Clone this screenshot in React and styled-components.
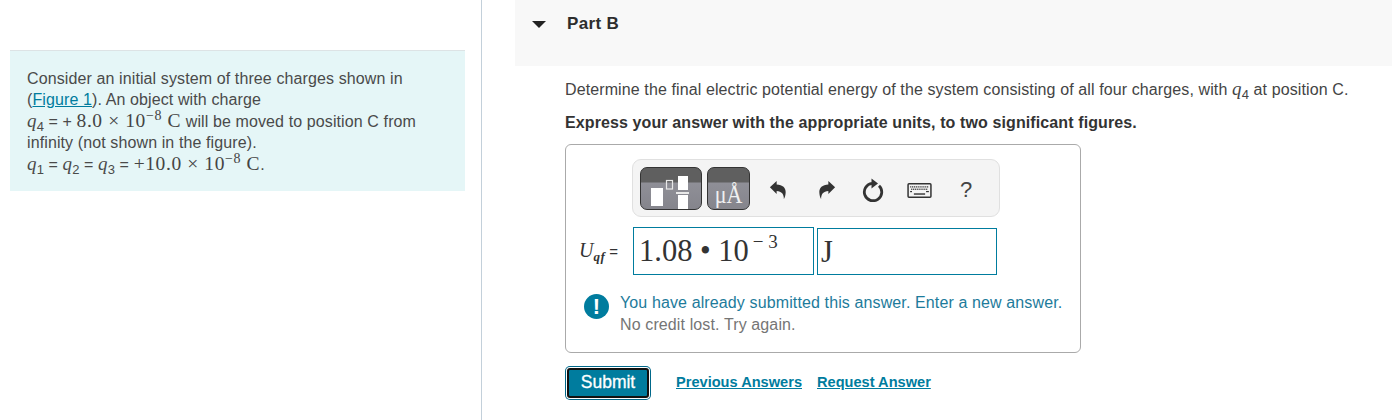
import React from 'react';
import styled, { createGlobalStyle } from 'styled-components';

const GlobalStyle = createGlobalStyle`
  html, body { margin: 0; padding: 0; background: #fff; }
  body { font-family: "Liberation Sans", Arial, sans-serif; }
`;

const Page = styled.div`
  display: flex;
  width: 1392px;
  height: 420px;
  overflow: hidden;
`;

const LeftColumn = styled.aside`
  box-sizing: border-box;
  width: 482px;
  height: 420px;
  padding: 50px 16px 0 10px;
  border-right: 1px solid #c3d0da;
`;

const Intro = styled.div`
  box-sizing: border-box;
  height: 141px;
  padding: 17px 0 0 17px;
  background: #e5f6f7;
  border-top: 1px solid #dde3e5;
  color: #4a4a4a;
  font-size: 16px;
  letter-spacing: 0.11px;
  line-height: 21px;
`;

const IntroLine = styled.div`
  white-space: nowrap;
  height: ${p => p.$h || 21}px;
  line-height: ${p => p.$h || 21}px;
`;

const FigureLink = styled.a`
  color: #007c9e;
  text-decoration: underline;
`;

const Math = styled.span`
  font-family: "Liberation Serif", "Times New Roman", serif;
  font-size: 19.5px;
  letter-spacing: 0.6px;
  color: #444;
`;

const Var = styled.i`
  font-family: "Liberation Serif", "Times New Roman", serif;
  font-size: 19px;
`;

const Sub = styled.sub`
  font-size: 13px;
  line-height: 0;
`;

const Sup = styled.sup`
  font-size: 14px;
  line-height: 0;
  vertical-align: 7px;
`;

const RightColumn = styled.main`
  flex: 1;
  padding-left: 33px;
`;

const PartHeader = styled.header`
  display: flex;
  align-items: flex-start;
  height: 66px;
  padding: 15px 0 0 17px;
  box-sizing: border-box;
  background: #f8f8f8;
`;

const Caret = styled.span`
  width: 0;
  height: 0;
  margin: 6px 21px 0 0;
  border-left: 7px solid transparent;
  border-right: 7px solid transparent;
  border-top: 7px solid #222;
`;

const PartTitle = styled.h2`
  margin: 0;
  font-size: 17px;
  letter-spacing: 0.35px;
  line-height: 18px;
  font-weight: 700;
  color: #2d2d2d;
`;

const Body = styled.section`
  padding: 12px 0 0 50px;
`;

const Question = styled.p`
  margin: 0;
  font-size: 16px;
  letter-spacing: 0.11px;
  line-height: 21px;
  color: #444;
  white-space: nowrap;
`;

const Instruction = styled.p`
  margin: 12px 0 0;
  font-size: 16px;
  letter-spacing: 0.11px;
  line-height: 21px;
  font-weight: 700;
  color: #333;
`;

const AnswerBox = styled.div`
  box-sizing: border-box;
  width: 516px;
  height: 209px;
  margin-top: 11px;
  padding: 14px 0 0 13px;
  border: 1px solid #aaa;
  border-radius: 6px;
`;

const Toolbar = styled.div`
  box-sizing: border-box;
  display: flex;
  align-items: center;
  width: 368px;
  height: 58px;
  margin-left: 53px;
  padding-left: 7px;
  background: #f4f4f4;
  border: 1px solid #e0e0e0;
  border-radius: 9px;
`;

const TemplateButton = styled.div`
  box-sizing: border-box;
  display: flex;
  align-items: flex-end;
  justify-content: center;
  width: ${p => p.$w}px;
  height: 43px;
  margin-right: ${p => p.$mr}px;
  border: 1px solid #333;
  border-radius: 7px;
  background: linear-gradient(#5f5f5f 0, #5f5f5f 14px, #8f8f97 15px, #85858c 100%);
  overflow: hidden;
`;

const UnitGlyph = styled.span`
  display: inline-block;
  font-family: "Liberation Serif", "Times New Roman", serif;
  font-size: 22px;
  line-height: 25px;
  color: #f0f0f0;
  white-space: nowrap;
  transform: translateY(-1px) scaleY(1.12);
  transform-origin: 50% 80%;
`;

const ToolIcon = styled.span`
  display: flex;
  align-items: center;
  justify-content: center;
  width: ${p => p.$w}px;
  margin-left: ${p => p.$ml || 0}px;
  padding-top: 4px;
  color: #333;
`;

const HelpMark = styled.span`
  font-size: 22px;
  color: #444;
  line-height: 24px;
`;

const InputRow = styled.div`
  display: flex;
  align-items: flex-end;
  margin-top: 10px;
`;

const InputLabel = styled.div`
  width: 54px;
  height: 46px;
  line-height: 43px;
  box-sizing: border-box;
  font-family: "Liberation Serif", "Times New Roman", serif;
  color: #333;
  white-space: nowrap;
`;

const LabelVar = styled.i`
  font-size: 20px;
`;

const LabelSub = styled.sub`
  font-size: 13px;
  font-style: italic;
  font-weight: 700;
  letter-spacing: 0.5px;
  line-height: 0;
  vertical-align: -4px;
`;

const LabelEq = styled.span`
  font-family: "Liberation Sans", Arial, sans-serif;
  font-size: 15px;
  margin-left: 4px;
`;

const AnswerField = styled.div`
  box-sizing: border-box;
  width: ${p => p.$w}px;
  height: ${p => p.$h}px;
  margin-right: 3px;
  padding-left: ${p => p.$pl}px;
  border: 1px solid #007c9e;
  font-family: "Liberation Serif", "Times New Roman", serif;
  font-size: 30.5px;
  line-height: 47px;
  color: #333;
  white-space: nowrap;
`;

const Exponent = styled.sup`
  font-size: 19px;
  line-height: 0;
  vertical-align: 13px;
  margin-left: 4px;
`;

const Feedback = styled.div`
  display: flex;
  align-items: flex-start;
  margin-top: 17px;
  margin-left: 5px;
`;

const FeedbackIcon = styled.span`
  flex: none;
  display: flex;
  align-items: center;
  justify-content: center;
  width: 25px;
  height: 25px;
  margin: 2px 11px 0 0;
  border-radius: 50%;
  background: #007c9e;
  color: #fff;
  font-size: 22px;
  font-weight: 700;
`;

const FeedbackText = styled.div`
  font-size: 16px;
  letter-spacing: 0.12px;
  line-height: 21.5px;
  white-space: nowrap;
  color: #757575;
`;

const FeedbackLead = styled.div`
  color: #1d7b9b;
`;

const Actions = styled.div`
  display: flex;
  align-items: center;
  margin-top: 15px;
  padding-left: 2px;
`;

const SubmitButton = styled.button`
  box-sizing: border-box;
  width: 82px;
  height: 30px;
  padding: 0 0 2px;
  background: #007c9e;
  border: 2px solid #111;
  border-radius: 3px;
  box-shadow: 0 0 0 1px #fff, 0 0 0 2px #00688a;
  color: #fff;
  font-family: "Liberation Sans", Arial, sans-serif;
  font-size: 17.5px;
  font-weight: 400;
  -webkit-text-stroke: 0.3px #fff;
`;

const ActionLink = styled.a`
  margin: 0 0 2px ${p => p.$ml}px;
  color: #007c9e;
  font-size: 14.6px;
  font-weight: 700;
  text-decoration: underline;
`;

const FractionIcon = () => (
  <svg width="60" height="41" viewBox="0 0 60 41" style={{ display: 'block' }}>
    <rect x="10" y="20" width="12" height="18" fill="#fff" />
    <rect x="25.500" y="12.500" width="6" height="8.500" fill="none" stroke="#e8e8e8" strokeWidth="1.200" />
    <rect x="37" y="8" width="10" height="14" fill="#fff" />
    <rect x="35" y="24" width="13" height="2" fill="#e8e8e8" />
    <rect x="37" y="27" width="10" height="14" fill="#fff" />
  </svg>
);

const UndoIcon = ({ flip }) => (
  <svg width="18" height="20" viewBox="0 0 20 22" style={flip ? { transform: 'scaleX(-1)' } : undefined}>
    <path d="M1 8 L8.500 1 V5 C15 5 19 9 18.500 14 C18.300 17 17.500 19.500 16.500 21 C16.800 16 14 12 8.500 12 V15.500 Z" fill="#333" />
  </svg>
);

const ResetIcon = () => (
  <svg width="22" height="24" viewBox="0 0 22 24">
    <path d="M10 5.400 A8.700 8.700 0 1 0 17 7.700" fill="none" stroke="#333" strokeWidth="2.800" />
    <path d="M9.500 0.500 L16 5.400 L9.500 10.500 Z" fill="#333" />
  </svg>
);

const KeyboardIcon = () => {
  const dots = [];
  for (let i = 0; i < 10; i++) dots.push(<rect key={`a${i}`} x={3 + i * 2} y="3.500" width="1.300" height="1.300" />);
  for (let i = 0; i < 9; i++) dots.push(<rect key={`b${i}`} x={4 + i * 2} y="6" width="1.300" height="1.300" />);
  return (
    <svg width="25" height="15" viewBox="0 0 26 16">
      <rect x="0.800" y="0.800" width="24.400" height="14.400" rx="1" fill="#f4f4f4" stroke="#333" strokeWidth="1.600" />
      <g fill="#333">
        {dots}
        <rect x="3" y="8.500" width="2" height="1.300" />
        <rect x="20" y="8.500" width="3" height="1.300" />
        <rect x="7" y="11" width="12" height="1.500" />
      </g>
    </svg>
  );
};

const App = () => (
  <Page>
    <GlobalStyle />
    <LeftColumn>
      <Intro>
        <IntroLine>Consider an initial system of three charges shown in</IntroLine>
        <IntroLine>(<FigureLink href="#">Figure 1</FigureLink>). An object with charge</IntroLine>
        <IntroLine $h={22}>
          <Var>q</Var><Sub>4</Sub> = + <Math>8.0 × 10<Sup>−8</Sup> C</Math> will be moved to position C from
        </IntroLine>
        <IntroLine>infinity (not shown in the figure).</IntroLine>
        <IntroLine $h={22}>
          <Var>q</Var><Sub>1</Sub> = <Var>q</Var><Sub>2</Sub> = <Var>q</Var><Sub>3</Sub> = <Math>+10.0 × 10<Sup>−8</Sup> C</Math>.
        </IntroLine>
      </Intro>
    </LeftColumn>
    <RightColumn>
      <PartHeader>
        <Caret />
        <PartTitle>Part B</PartTitle>
      </PartHeader>
      <Body>
        <Question>
          Determine the final electric potential energy of the system consisting of all four charges, with <Var>q</Var><Sub>4</Sub> at position C.
        </Question>
        <Instruction>Express your answer with the appropriate units, to two significant figures.</Instruction>
        <AnswerBox>
          <Toolbar>
            <TemplateButton $w={62} $mr={5}><FractionIcon /></TemplateButton>
            <TemplateButton $w={43} $mr={6}><UnitGlyph>μÅ</UnitGlyph></TemplateButton>
            <ToolIcon $w={18} $ml={13}><UndoIcon /></ToolIcon>
            <ToolIcon $w={18} $ml={31}><UndoIcon flip /></ToolIcon>
            <ToolIcon $w={22} $ml={26}><ResetIcon /></ToolIcon>
            <ToolIcon $w={25} $ml={23}><KeyboardIcon /></ToolIcon>
            <ToolIcon $w={14} $ml={27}><HelpMark>?</HelpMark></ToolIcon>
          </Toolbar>
          <InputRow>
            <InputLabel>
              <LabelVar>U</LabelVar><LabelSub>qf</LabelSub><LabelEq>=</LabelEq>
            </InputLabel>
            <AnswerField $w={181} $h={48} $pl={5}>1.08 • 10<Exponent>− 3</Exponent></AnswerField>
            <AnswerField $w={180} $h={47} $pl={3}>J</AnswerField>
          </InputRow>
          <Feedback>
            <FeedbackIcon>!</FeedbackIcon>
            <FeedbackText>
              <FeedbackLead>You have already submitted this answer. Enter a new answer.</FeedbackLead>
              No credit lost. Try again.
            </FeedbackText>
          </Feedback>
        </AnswerBox>
        <Actions>
          <SubmitButton>Submit</SubmitButton>
          <ActionLink $ml={27} href="#">Previous Answers</ActionLink>
          <ActionLink $ml={15} href="#">Request Answer</ActionLink>
        </Actions>
      </Body>
    </RightColumn>
  </Page>
);

export default App;
